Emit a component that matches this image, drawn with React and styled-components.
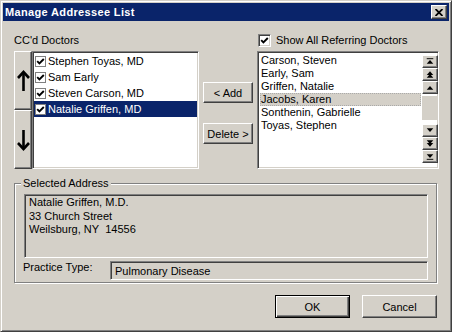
import React from "react";
import styled, { createGlobalStyle } from "styled-components";

const face = "#d4d0c8";
const shadow = "#808080";
const darkShadow = "#404040";
const navy = "#0a246a";

const GlobalStyle = createGlobalStyle`
  html, body {
    margin: 0;
    padding: 0;
    background: ${face};
  }
  * {
    box-sizing: border-box;
  }
`;

const doctors = [
  "Stephen Toyas, MD",
  "Sam Early",
  "Steven Carson, MD",
  "Natalie Griffen, MD",
];

const referring = [
  "Carson, Steven",
  "Early, Sam",
  "Griffen, Natalie",
  "Jacobs, Karen",
  "Sonthenin, Gabrielle",
  "Toyas, Stephen",
];

function CheckMark() {
  return (
    <svg width="9" height="9" viewBox="0 0 9 9">
      <path d="M1.2 4.2 L3.4 6.4 L7.8 2" fill="none" stroke="#000" strokeWidth="1.9" />
    </svg>
  );
}

function Arrow({ down }) {
  return (
    <svg width="13" height="22" viewBox="0 0 13 22" style={down ? { transform: "rotate(180deg)" } : undefined}>
      <path d="M6.5 2 V21" stroke="#000" strokeWidth="2.6" />
      <path d="M1 8 L6.5 2 L12 8" fill="none" stroke="#000" strokeWidth="2.6" />
    </svg>
  );
}

function ScrollGlyph({ kind }) {
  const up = kind.startsWith("up");
  const shapes = {
    upEnd: (
      <>
        <rect x="4" y="2" width="7" height="1" />
        <path d="M7.5 4 L11 8 L4 8 Z" />
      </>
    ),
    upPage: (
      <>
        <path d="M7.5 2 L11 6 L4 6 Z" />
        <path d="M7.5 5 L11 9 L4 9 Z" />
      </>
    ),
    upOne: <path d="M7.5 4 L11 8 L4 8 Z" />,
  };
  const key = up ? kind : kind.replace("down", "up");
  return (
    <svg
      width="15"
      height="11"
      viewBox="0 0 15 11"
      fill="#000"
      style={up ? undefined : { transform: "scaleY(-1)" }}
    >
      {shapes[key]}
    </svg>
  );
}

function App() {
  return (
    <>
      <GlobalStyle />
      <Window>
        <TitleBar>
          <TitleText>Manage Addressee List</TitleText>
          <CloseButton>
            <svg width="8" height="7" viewBox="0 0 8 7">
              <path d="M0.5 0 L7.5 7 M7.5 0 L0.5 7" stroke="#000" strokeWidth="1.8" />
            </svg>
          </CloseButton>
        </TitleBar>
        <Body>
          <TopGrid>
            <FieldLabel>CC'd Doctors</FieldLabel>
            <span />
            <CheckRow>
              <BigCheck>
                <CheckMark />
              </BigCheck>
              Show All Referring Doctors
            </CheckRow>

            <Picker>
              <MoveButtons>
                <MoveButton>
                  <Arrow />
                </MoveButton>
                <MoveButton>
                  <Arrow down />
                </MoveButton>
              </MoveButtons>
              <ListBox>
                {doctors.map((name, i) => (
                  <DoctorRow key={name} selected={i === doctors.length - 1}>
                    <SmallCheck>
                      <CheckMark />
                    </SmallCheck>
                    {name}
                  </DoctorRow>
                ))}
              </ListBox>
            </Picker>

            <ActionColumn>
              <PushButton>&lt; Add</PushButton>
              <PushButton>Delete &gt;</PushButton>
            </ActionColumn>

            <RefList>
              <RefItems>
                {referring.map((name) => (
                  <RefRow key={name} active={name === "Jacobs, Karen"}>
                    {name}
                  </RefRow>
                ))}
              </RefItems>
              <ScrollColumn>
                <ScrollGroup>
                  <ScrollButton><ScrollGlyph kind="upEnd" /></ScrollButton>
                  <ScrollButton><ScrollGlyph kind="upPage" /></ScrollButton>
                  <ScrollButton><ScrollGlyph kind="upOne" /></ScrollButton>
                </ScrollGroup>
                <ScrollGroup>
                  <ScrollButton><ScrollGlyph kind="downOne" /></ScrollButton>
                  <ScrollButton><ScrollGlyph kind="downPage" /></ScrollButton>
                  <ScrollButton><ScrollGlyph kind="downEnd" /></ScrollButton>
                </ScrollGroup>
              </ScrollColumn>
            </RefList>
          </TopGrid>

          <Group>
            <Legend>Selected Address</Legend>
            <AddressBox>
              <div>Natalie Griffen, M.D.</div>
              <div>33 Church Street</div>
              <div>Weilsburg, NY&nbsp; 14556</div>
            </AddressBox>
            <PracticeRow>
              <PracticeLabel>Practice Type:</PracticeLabel>
              <ReadOnlyField>Pulmonary Disease</ReadOnlyField>
            </PracticeRow>
          </Group>

          <ButtonBar>
            <DialogButton isDefault>OK</DialogButton>
            <DialogButton>Cancel</DialogButton>
          </ButtonBar>
        </Body>
      </Window>
    </>
  );
}

const Window = styled.div`
  width: 452px;
  height: 332px;
  display: flex;
  flex-direction: column;
  background: ${face};
  border-top: 1px solid ${face};
  border-left: 1px solid ${face};
  border-right: 1px solid ${darkShadow};
  border-bottom: 1px solid ${darkShadow};
  box-shadow: inset 1px 1px 0 #fff, inset -1px -1px 0 ${shadow};
  padding: 2px;
  font-family: "Liberation Sans", Arial, sans-serif;
  font-size: 11px;
  color: #000;
`;

const TitleBar = styled.div`
  height: 18px;
  display: flex;
  align-items: center;
  justify-content: space-between;
  background: ${navy};
  padding: 0 2px 0 2px;
`;

const TitleText = styled.div`
  color: #fff;
  font-weight: bold;
  font-size: 11px;
  letter-spacing: 0.35px;
`;

const CloseButton = styled.div`
  width: 16px;
  height: 14px;
  display: flex;
  align-items: center;
  justify-content: center;
  background: ${face};
  border-top: 1px solid #fff;
  border-left: 1px solid #fff;
  border-right: 1px solid ${darkShadow};
  border-bottom: 1px solid ${darkShadow};
  box-shadow: inset -1px -1px 0 ${shadow};
`;

const Body = styled.div`
  flex: 1;
  display: flex;
  flex-direction: column;
  padding: 11px 10px 0 11px;
`;

const TopGrid = styled.div`
  display: grid;
  grid-template-columns: 185px 50px 1fr;
  grid-template-rows: 16px 118px;
  column-gap: 4px;
  row-gap: 3px;
`;

const FieldLabel = styled.div`
  display: flex;
  align-items: center;
  line-height: 13px;
`;

const CheckRow = styled.div`
  display: flex;
  align-items: center;
  gap: 5px;
  padding-left: 1px;
  line-height: 13px;
`;

const BigCheck = styled.span`
  width: 13px;
  height: 13px;
  display: flex;
  align-items: center;
  justify-content: center;
  background: #fff;
  border-top: 1px solid ${shadow};
  border-left: 1px solid ${shadow};
  border-right: 1px solid #fff;
  border-bottom: 1px solid #fff;
  box-shadow: inset 1px 1px 0 ${darkShadow}, inset -1px -1px 0 ${face};
`;

const SmallCheck = styled.span`
  width: 11px;
  height: 11px;
  flex: none;
  display: flex;
  align-items: center;
  justify-content: center;
  background: #fff;
  border: 1px solid ${shadow};
  margin: 0 1px 0 1px;
`;

const Picker = styled.div`
  display: flex;
`;

const MoveButtons = styled.div`
  width: 18px;
  display: flex;
  flex-direction: column;
`;

const raised = `
  background: ${face};
  border-top: 1px solid #fff;
  border-left: 1px solid #fff;
  border-right: 1px solid ${darkShadow};
  border-bottom: 1px solid ${darkShadow};
  box-shadow: inset -1px -1px 0 ${shadow};
`;

const MoveButton = styled.div`
  flex: 1;
  display: flex;
  align-items: center;
  justify-content: center;
  ${raised}
`;

const sunken = `
  border-top: 1px solid ${shadow};
  border-left: 1px solid ${shadow};
  border-right: 1px solid #fff;
  border-bottom: 1px solid #fff;
  box-shadow: inset 1px 1px 0 ${darkShadow}, inset -1px -1px 0 ${face};
`;

const ListBox = styled.div`
  flex: 1;
  background: #fff;
  padding: 1px 1px;
  ${sunken}
`;

const DoctorRow = styled.div`
  height: 16px;
  display: flex;
  align-items: center;
  gap: 1px;
  white-space: nowrap;
  background: ${(p) => (p.selected ? navy : "transparent")};
  color: ${(p) => (p.selected ? "#fff" : "#000")};
`;

const ActionColumn = styled.div`
  display: flex;
  flex-direction: column;
  gap: 20px;
  padding-top: 31px;
`;

const PushButton = styled.div`
  height: 21px;
  display: flex;
  align-items: center;
  justify-content: center;
  ${raised}
`;

const RefList = styled.div`
  display: flex;
  background: #fff;
  padding: 2px 0 0 2px;
  ${sunken}
`;

const RefItems = styled.div`
  flex: 1;
  padding-right: 1px;
`;

const RefRow = styled.div`
  height: 13px;
  line-height: 13px;
  padding-left: 1px;
  white-space: nowrap;
  background: ${(p) => (p.active ? face : "transparent")};
  outline: ${(p) => (p.active ? "1px dotted #aaa" : "none")};
  outline-offset: -1px;
`;

const ScrollColumn = styled.div`
  width: 16px;
  display: flex;
  flex-direction: column;
  justify-content: space-between;
  padding: 1px 0 5px;
  background: linear-gradient(${face}, ${face}) no-repeat 0 42px / 16px 24px;
`;

const ScrollGroup = styled.div`
  display: flex;
  flex-direction: column;
`;

const ScrollButton = styled.div`
  height: 13px;
  display: flex;
  align-items: center;
  justify-content: center;
  ${raised}
`;

const Group = styled.fieldset`
  margin: 7px 2px 0 0;
  padding: 4px 8px 2px 9px;
  border: 1px solid ${shadow};
  box-shadow: 1px 1px 0 #fff, inset 1px 1px 0 #fff;
  min-width: 0;
`;

const Legend = styled.legend`
  padding: 0 2px;
  margin-left: -3px;
  line-height: 14px;
  background: ${face};
`;

const AddressBox = styled.div`
  height: 64px;
  padding: 1px 4px;
  line-height: 13.5px;
  ${sunken}
`;

const PracticeRow = styled.div`
  display: grid;
  grid-template-columns: 86px 1fr;
  align-items: start;
  margin-top: 3px;
`;

const PracticeLabel = styled.div`
  line-height: 13px;
  margin-left: -1px;
`;

const ReadOnlyField = styled.div`
  height: 19px;
  display: flex;
  align-items: center;
  padding: 0 4px;
  ${sunken}
`;

const ButtonBar = styled.div`
  display: flex;
  justify-content: flex-end;
  gap: 12px;
  margin: 12px 2px 0 0;
`;

const DialogButton = styled.div`
  width: 75px;
  height: 23px;
  display: flex;
  align-items: center;
  justify-content: center;
  background: ${face};
  ${(p) =>
    p.isDefault
      ? `
    border: 1px solid #000;
    box-shadow: inset 1px 1px 0 #fff, inset -1px -1px 0 ${darkShadow}, inset -2px -2px 0 ${shadow};
  `
      : `
    border-top: 1px solid #fff;
    border-left: 1px solid #fff;
    border-right: 1px solid ${darkShadow};
    border-bottom: 1px solid ${darkShadow};
    box-shadow: inset -1px -1px 0 ${shadow};
  `}
`;

export default App;
